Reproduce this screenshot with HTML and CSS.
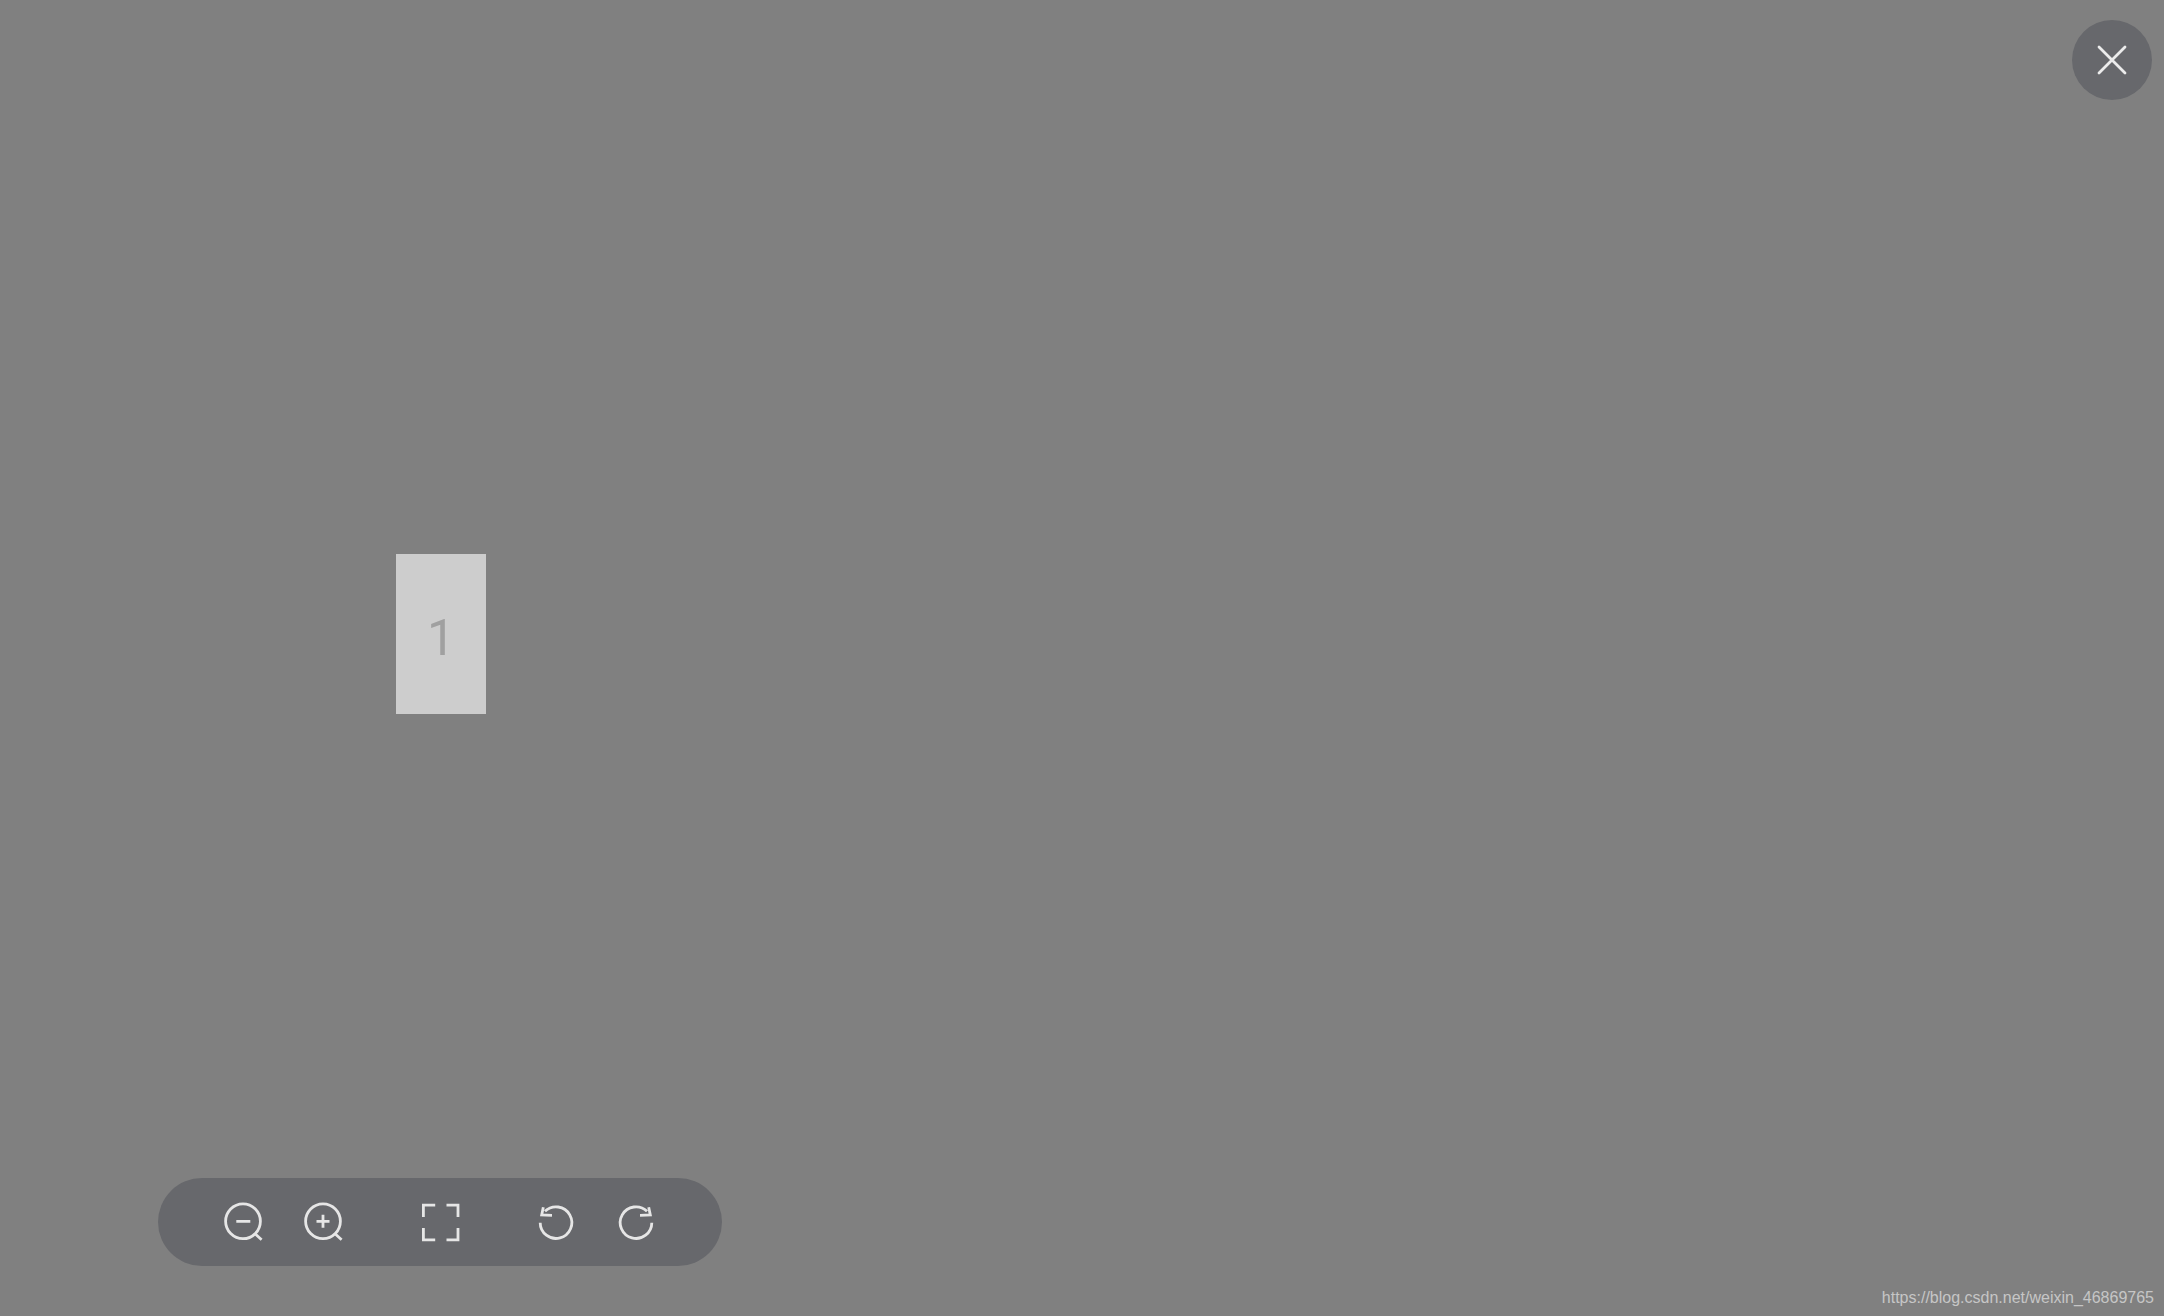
FILE: index.html
```html
<!DOCTYPE html>
<html lang="en">
<head>
<meta charset="utf-8">
<title>Image viewer</title>
<link rel="stylesheet" href="styles.css">
</head>
<body>
<main class="viewer">
  <div class="picture"><span class="picture-label">1</span></div>

  <button class="close" type="button" aria-label="Close">
    <svg class="icon-close" viewBox="0 0 32 32"><path d="M3 3 29 29M29 3 3 29"/></svg>
  </button>

  <div class="toolbar">
    <div class="group">
      <svg class="icon" viewBox="0 0 44 44"><circle cx="22" cy="21.3" r="17.4"/><path d="M15.3 21.3H29.3M34.3 34 40.6 39.7"/></svg>
      <svg class="icon" viewBox="0 0 44 44"><circle cx="22" cy="21.3" r="17.4"/><path d="M15.5 21.3H28.5M22 14.8V27.8M34.3 34 40.6 39.7"/></svg>
    </div>
    <div class="group">
      <svg class="icon" viewBox="0 0 44 44"><path d="M17.2 5.2H5.4V17M17.2 39.8H5.4V28M28.5 5.2H40V17M28.5 39.8H40V28"/></svg>
    </div>
    <div class="group">
      <svg class="icon" viewBox="0 0 44 44"><path d="M11 11.3A15.8 15.8 0 1 1 6.2 22.7M9.3 7.3 7.7 15 18 15.3"/></svg>
      <svg class="icon" viewBox="0 0 44 44"><path d="M33 11.3A15.8 15.8 0 1 0 37.8 22.7M34.7 7.3 36.3 15 26 15.3"/></svg>
    </div>
  </div>

  <footer class="watermark">https://blog.csdn.net/weixin_46869765</footer>
</main>
</body>
</html>
```
FILE: styles.css
```css
html, body {
  margin: 0;
  height: 100%;
  background: #808080;
}

.viewer {
  position: relative;
  width: 2164px;
  height: 1316px;
  overflow: hidden;
  background: #808080;
  font-family: "Liberation Sans", Arial, sans-serif;
}

.picture {
  position: absolute;
  left: 396px;
  top: 554px;
  width: 90px;
  height: 160px;
  display: flex;
  align-items: center;
  justify-content: center;
  background: #cdcdcd;
}

.picture-label {
  position: relative;
  top: 4px;
  font-family: Roboto, "Liberation Sans", sans-serif;
  font-size: 50px;
  font-weight: 400;
  line-height: 1;
  color: #a0a0a0;
}

.close {
  position: absolute;
  left: 2072px;
  top: 20px;
  width: 80px;
  height: 80px;
  padding: 0;
  border: 0;
  border-radius: 50%;
  display: flex;
  align-items: center;
  justify-content: center;
  background: #67686c;
}

.icon-close {
  width: 32px;
  height: 32px;
  fill: none;
  stroke: #ececec;
  stroke-width: 2.8;
  stroke-linecap: round;
}

.toolbar {
  position: absolute;
  left: 158px;
  top: 1178px;
  width: 564px;
  height: 88px;
  box-sizing: border-box;
  padding: 0 63.7px 0 62.7px;
  border-radius: 44px;
  display: flex;
  align-items: center;
  justify-content: space-between;
  background: #67686c;
}

.group {
  display: flex;
  gap: 36.6px;
}

.icon {
  display: block;
  width: 44px;
  height: 44px;
  fill: none;
  stroke: #e6e6e6;
  stroke-width: 2.8;
}

.watermark {
  position: absolute;
  right: 10px;
  bottom: 8px;
  font-size: 16px;
  line-height: 20px;
  color: #c6c6c6;
  white-space: nowrap;
}
```
